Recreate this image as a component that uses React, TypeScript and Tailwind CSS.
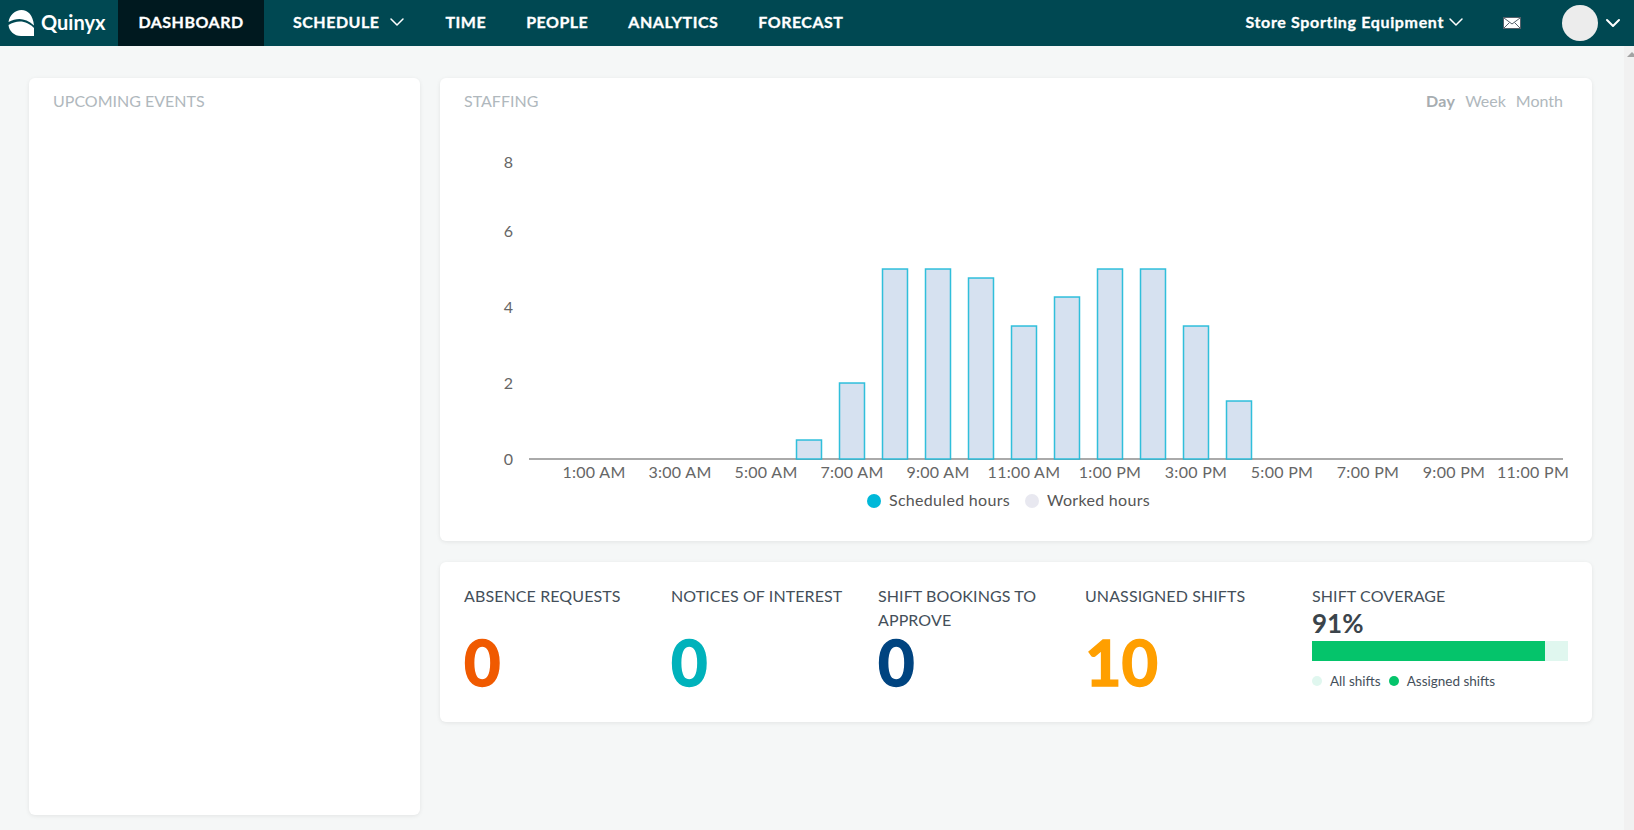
import { ChevronDown } from 'lucide-react';

const navItems = ['TIME', 'PEOPLE', 'ANALYTICS', 'FORECAST'];

// x position and top edge of each staffing bar
const bars = [
  [796, 440],
  [839, 383],
  [882, 269],
  [925, 269],
  [968, 278],
  [1011, 326],
  [1054, 297],
  [1097, 269],
  [1140, 269],
  [1183, 326],
  [1226, 401],
];

const yLabels = [
  ['8', 168],
  ['6', 237],
  ['4', 313],
  ['2', 389],
  ['0', 465],
];

const xLabels = [
  ['1:00 AM', 594],
  ['3:00 AM', 680],
  ['5:00 AM', 766],
  ['7:00 AM', 852],
  ['9:00 AM', 938],
  ['11:00 AM', 1024],
  ['1:00 PM', 1110],
  ['3:00 PM', 1196],
  ['5:00 PM', 1282],
  ['7:00 PM', 1368],
  ['9:00 PM', 1454],
  ['11:00 PM', 1533],
];

function StaffingChart() {
  return (
    <svg width="1152" height="390" viewBox="440 130 1152 390" className="block">
      {yLabels.map(([label, y]) => (
        <text key={label} x="513" y={y} textAnchor="end" fontSize="16" fill="#666666">
          {label}
        </text>
      ))}
      <rect x="529" y="458" width="1034" height="2" fill="#aaaaaa" />
      {bars.map(([x, top]) => (
        <rect key={x} x={x + 0.5} y={top} width="25" height={459 - top} fill="#d6e1f0" stroke="#0fb6d6" strokeOpacity="0.85" strokeWidth="1.5" />
      ))}
      {xLabels.map(([label, x]) => (
        <text key={label} x={x} y="478" textAnchor="middle" fontSize="16" letterSpacing="0.3" fill="#666666">
          {label}
        </text>
      ))}
      <circle cx="874" cy="501" r="7" fill="#00b8d9" />
      <text x="889" y="506" fontSize="16" letterSpacing="0.3" fill="#555555">Scheduled hours</text>
      <circle cx="1032" cy="501" r="7" fill="#e8e8f0" />
      <text x="1047" y="506" fontSize="16" letterSpacing="0.3" fill="#555555">Worked hours</text>
    </svg>
  );
}

function Stat({ title, value, color, width }: { title: string; value: string; color: string; width: string }) {
  return (
    <div className={`${width} shrink-0`}>
      <div className="h-[48px] text-[16px] leading-[24px] tracking-[0.1px] text-[#444f5a]">{title}</div>
      <div className={`mt-[2px] text-[63px] font-bold leading-[56px] [-webkit-text-stroke:1.5px_currentColor] ${color}`}>{value}</div>
    </div>
  );
}

export default function App() {
  return (
    <div className="flex h-[830px] w-[1634px] flex-col overflow-hidden bg-[#f5f7f7] font-['Lato',sans-serif]">
      <header className="flex h-[46px] shrink-0 items-center bg-[#004852] pb-[2px] text-white">
        <div className="flex w-[118px] items-center pl-[8px]">
          <svg width="27" height="26" viewBox="0 0 27 26" className="mt-[2px]">
            <path d="M0.500 12C1.500 5 7 0 13.500 0C20 0 25 5 26 15.500C21 11 16 9 11.500 9C8 9 4 10 0.500 12Z" fill="#ffffff" />
            <path d="M0.500 15C4 13 8 11.500 12 11.500C17 11.500 22 14 26 18V26H13C6 26 1 21 0.500 15Z" fill="#ffffff" />
          </svg>
          <span className="ml-[6px] text-[20px] font-bold">Quinyx</span>
        </div>
        <div className="mt-[2px] flex h-[46px] w-[146px] items-center justify-center bg-[#00191f] pb-[2px] text-[16px] font-bold tracking-[0.5px] [-webkit-text-stroke:0.3px_currentColor]">DASHBOARD</div>
        <div className="ml-[29px] flex items-center text-[16px] font-bold tracking-[0.5px] [-webkit-text-stroke:0.3px_currentColor]">
          SCHEDULE
          <ChevronDown size={24} strokeWidth={1.5} className="ml-[6px]" />
        </div>
        <nav className="flex items-center gap-[40px] pl-[36px] text-[16px] font-bold tracking-[0.5px] [-webkit-text-stroke:0.3px_currentColor]">
          {navItems.map((item) => (
            <span key={item}>{item}</span>
          ))}
        </nav>
        <div className="ml-auto flex items-center text-[16px] font-bold tracking-[0.65px] [-webkit-text-stroke:0.3px_currentColor]">
          Store Sporting Equipment
          <ChevronDown size={24} strokeWidth={1.5} />
        </div>
        <svg width="18" height="12" viewBox="0 0 18 12" className="ml-[35px] mt-[2px]">
          <rect x="0.500" y="0.500" width="17" height="11" fill="#ffffff" stroke="#55606a" />
          <path d="M1 1L9 7L17 1M1 11L6.500 5.500M17 11L11.500 5.500" fill="none" stroke="#55606a" />
        </svg>
        <div className="ml-[41px] mt-[2px] h-[36px] w-[36px] rounded-full bg-[#ececec]" />
        <ChevronDown size={24} strokeWidth={2} className="ml-[3px] mr-[9px] mt-[2px]" />
      </header>
      <div className="flex min-h-0 flex-1">
        <main className="flex min-w-0 flex-1 gap-[20px] pl-[29px] pt-[32px]">
          <section className="h-[737px] w-[391px] rounded-[6px] bg-white px-[24px] py-[15px] shadow-[0_1px_4px_rgba(0,0,0,0.08)]">
            <h2 className="text-[16px] leading-[16px] text-[#b0b8bd]">UPCOMING EVENTS</h2>
          </section>
          <div className="flex w-[1152px] flex-col gap-[21px]">
            <section className="h-[463px] rounded-[6px] bg-white shadow-[0_1px_4px_rgba(0,0,0,0.08)]">
              <div className="flex h-[52px] items-start justify-between px-[24px] pt-[15px] text-[16px] leading-[16px] text-[#b0b8bd]">
                <h2>STAFFING</h2>
                <div className="mr-[5px] flex gap-[10px]">
                  <span className="font-bold tracking-[0.3px] text-[#a7adb1]">Day</span>
                  <span>Week</span>
                  <span>Month</span>
                </div>
              </div>
              <StaffingChart />
            </section>
            <section className="flex h-[160px] rounded-[6px] bg-white pl-[24px] pt-[22px] shadow-[0_1px_4px_rgba(0,0,0,0.08)]">
              <Stat title="ABSENCE REQUESTS" value="0" color="text-[#f05a00]" width="w-[207px]" />
              <Stat title="NOTICES OF INTEREST" value="0" color="text-[#00b2bb]" width="w-[207px]" />
              <Stat title="SHIFT BOOKINGS TO APPROVE" value="0" color="text-[#004480]" width="w-[207px]" />
              <Stat title="UNASSIGNED SHIFTS" value="10" color="text-[#ff9f00]" width="w-[227px]" />
              <div className="w-[256px] shrink-0">
                <div className="text-[16px] leading-[24px] tracking-[0.1px] text-[#444f5a]">SHIFT COVERAGE</div>
                <div className="text-[26px] font-bold leading-[30px] text-[#3b444b]">91%</div>
                <div className="mt-[3px] h-[20px] w-full bg-[#e0f7ef]">
                  <div className="h-full w-[91%] bg-[#05c46b]" />
                </div>
                <div className="mt-[12px] flex items-center text-[13.5px] leading-[16px] text-[#444f5a]">
                  <span className="h-[10px] w-[10px] rounded-full bg-[#e0f7ef]" />
                  <span className="ml-[8px]">All shifts</span>
                  <span className="ml-[8px] h-[10px] w-[10px] rounded-full bg-[#05c46b]" />
                  <span className="ml-[8px]">Assigned shifts</span>
                </div>
              </div>
            </section>
          </div>
        </main>
        <aside className="w-[10px] shrink-0 bg-[#f1f1f1] pt-[6px]">
          <svg width="10" height="6" viewBox="0 0 10 6" className="block">
            <polygon points="8,0 13,5 3,5" fill="#a3a3a3" />
          </svg>
        </aside>
      </div>
    </div>
  );
}
